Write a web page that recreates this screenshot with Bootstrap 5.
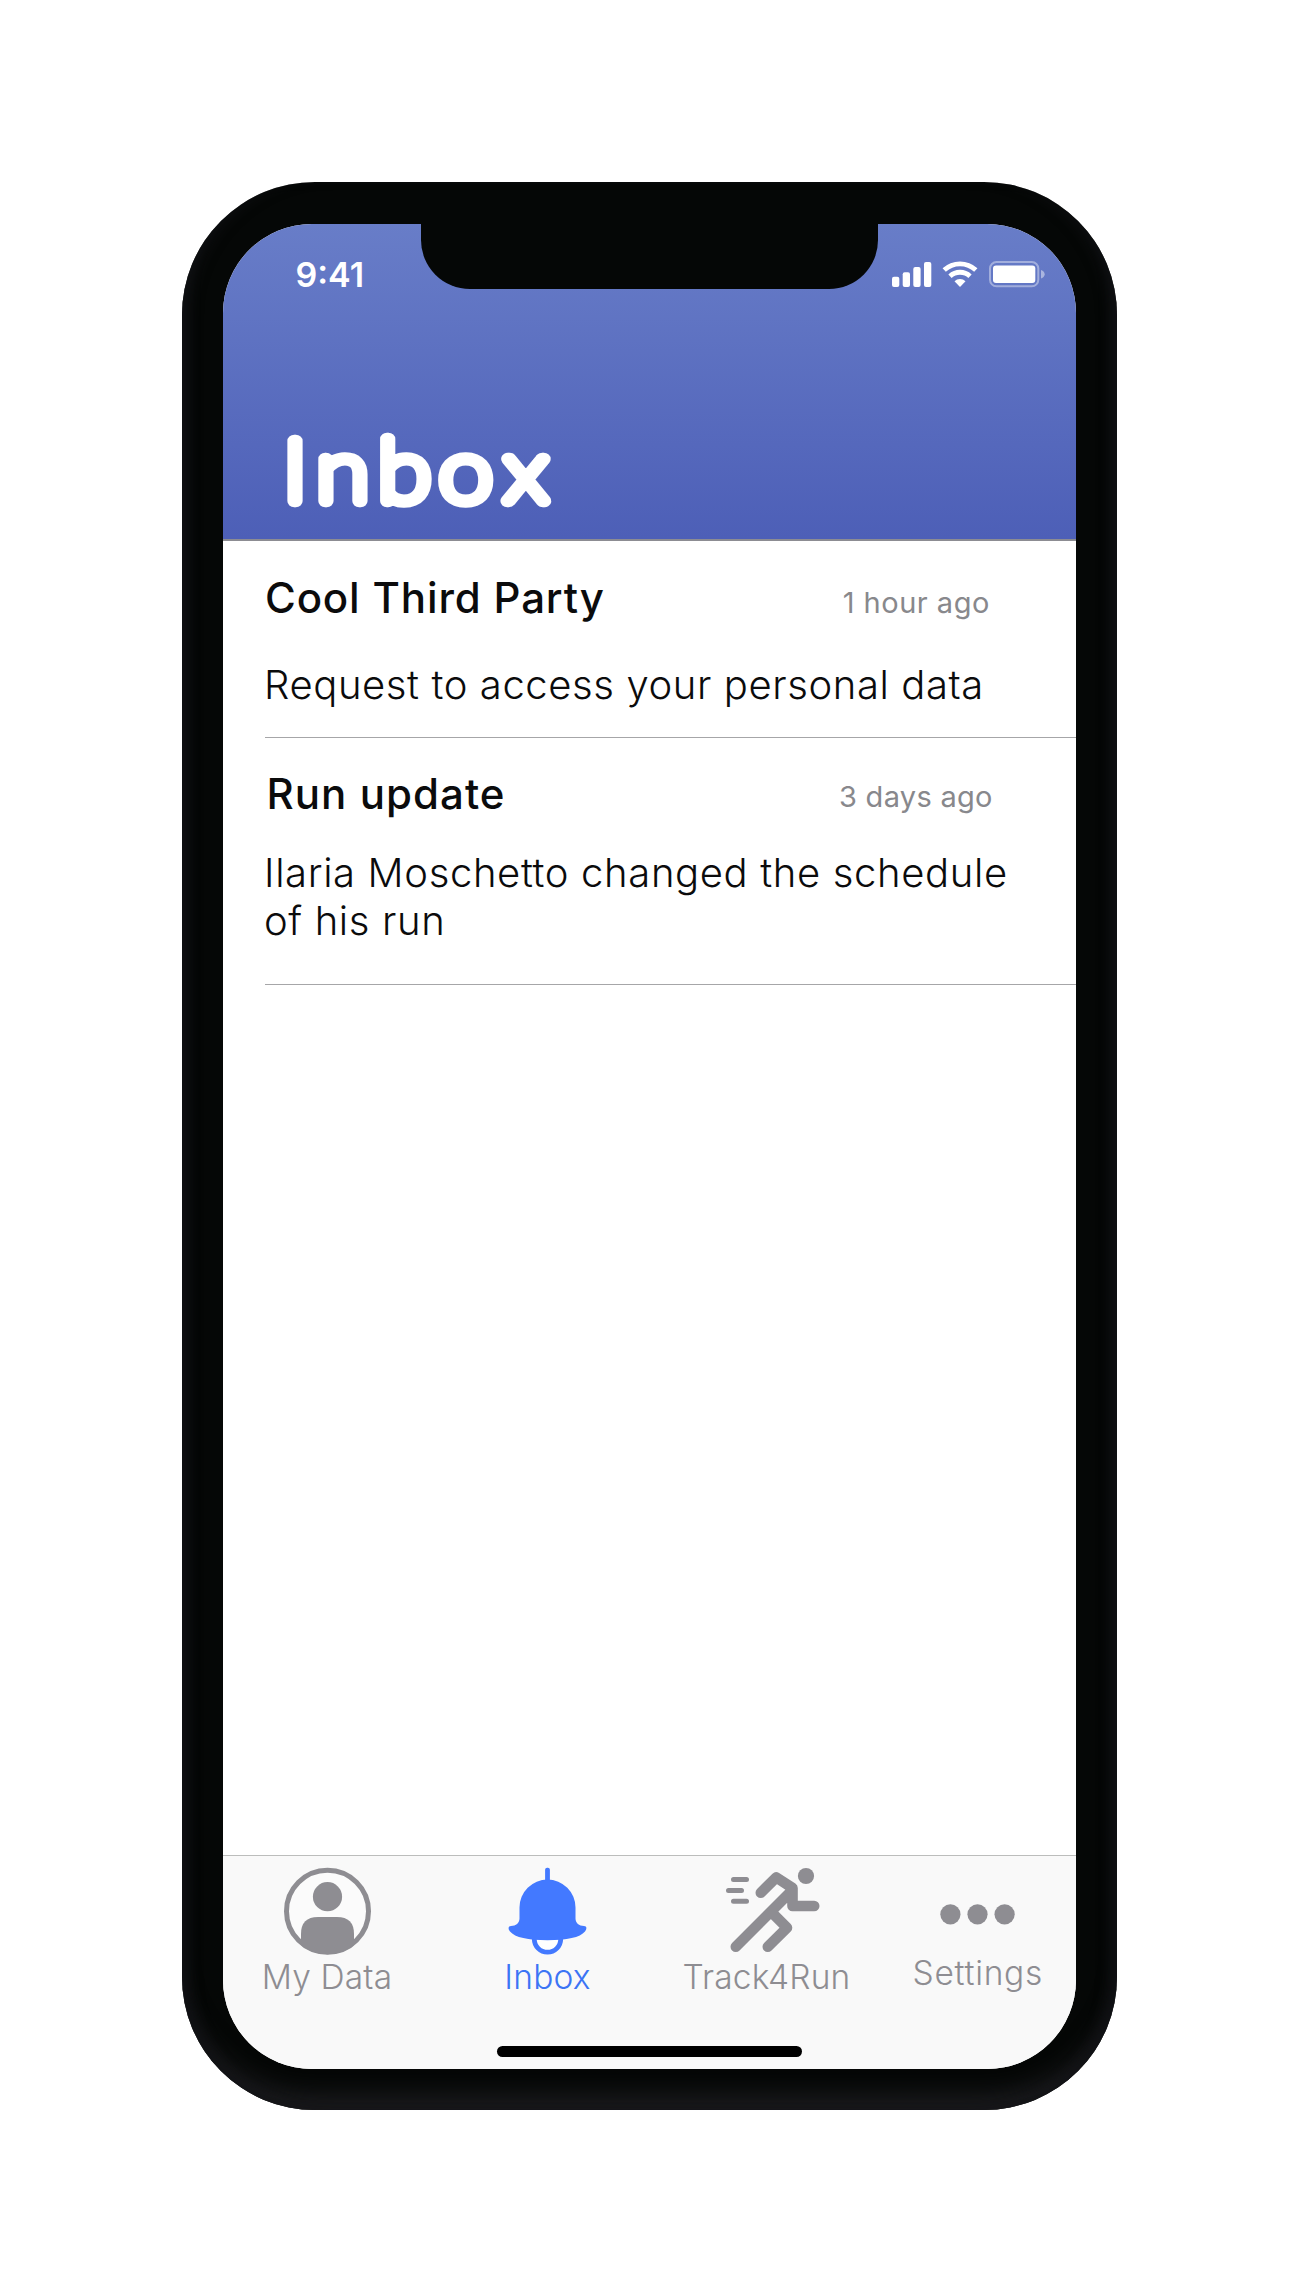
<!DOCTYPE html>
<html lang="en">
<head>
<meta charset="utf-8">
<meta name="viewport" content="width=device-width, initial-scale=1">
<title>Inbox</title>
<link href="https://cdn.jsdelivr.net/npm/bootstrap@5.3.0/dist/css/bootstrap.min.css" rel="stylesheet">
<style>
  body { font-family: Inter, "Liberation Sans", sans-serif; background: #fff; color: #0b0b0c; }
  svg { display: block; flex: none; }
  .stage { min-height: 2292px; padding-top: 182px; padding-left: 182px; }
  .phone { width: 934.5px; height: 1928px; padding: 42px 40.5px 41.5px; border-radius: 133px; background: #050706;
    box-shadow: inset 14px 0 14px -8px #101114, inset -14px 0 14px -8px #101114, inset 0 -24px 22px -8px #1b1b1e; }
  .screen { height: 100%; border-radius: 89px; background: #fff; }
  .notch { top: 0; left: 198.5px; width: 456.5px; height: 64.7px; border-radius: 0 0 49px 49px; background: #050706; }
  .app-header { height: 317px; background: linear-gradient(#687dc8, #4d5fb7); border-bottom: 2px solid #8c8c92; }
  .status-row { height: 100px; padding: 31px 30.5px 0 73px; }
  .clock { font-size: 34px; line-height: 40px; font-weight: 600; letter-spacing: 0; }
  .status-icons { margin-top: 5px; }
  .page-title { margin: 0 0 0 54px; height: 129px; }
  .page-title text { font-family: Lato, sans-serif; font-weight: 100; font-size: 86px; fill: #fff; stroke: #fff; stroke-width: 12.5px; stroke-linejoin: round; stroke-linecap: round; }
  .message { margin-left: 42.5px; border-bottom: 1.5px solid #a6a6a8; }
  .message-a { height: 197px; padding-top: 32.6px; }
  .message-b { height: 246.5px; padding-top: 32.3px; }
  .sender { font-size: 42px; line-height: 48px; font-weight: 500; letter-spacing: .85px; margin: 0; }
  .message-b .sender { letter-spacing: 1.05px; padding-left: 1.5px; }
  .when { font-size: 29px; line-height: 48px; color: #88888c; letter-spacing: .5px; margin: 5px 86.2px 0 0; font-weight: 400; }
  .message-b .when { letter-spacing: .3px; margin: 2.8px 83.2px 0 0; }
  .summary { font-size: 40px; line-height: 47.6px; font-weight: 300; letter-spacing: .6px; margin: 34px 0 0 -1px; }
  .message-b .summary { margin-top: 28.4px; letter-spacing: .64px; }
  .tabs { height: 213.5px; background: #f9f9f9; border-top: 1.5px solid #bcbdbc; padding-top: 8.5px; }
  .tab { color: #8e8d92; font-size: 33.5px; line-height: 40px; font-weight: 300; letter-spacing: .15px; text-decoration: none; white-space: nowrap; }
  .tab-on { color: #3c74f5; }
  .tab-data { width: 209px; } .tab-inbox { width: 232px; } .tab-run { width: 206px; }
  .tab-set { width: 206px; padding-left: 10.5px; letter-spacing: .7px; }
  .home-bar { width: 305px; height: 11px; border-radius: 6px; background: #000; margin: 0 auto 11.5px; }
</style>
</head>
<body>
<div class="stage">
  <div class="phone">
    <div class="screen position-relative overflow-hidden d-flex flex-column">
      <div class="notch position-absolute"></div>
      <header class="app-header text-white d-flex flex-column justify-content-between flex-shrink-0">
        <div class="status-row d-flex justify-content-between">
          <div class="clock">9:41</div>
          <svg class="status-icons" width="156" height="30" viewBox="0 0 156 30" fill="#fff">
            <rect x="2" y="16.7" width="7.3" height="10.3" rx="2"/>
            <rect x="12.7" y="12.3" width="7.3" height="14.7" rx="2"/>
            <rect x="23.3" y="7" width="7.3" height="20" rx="2"/>
            <rect x="34" y="2" width="7.3" height="25" rx="2"/>
            <g fill="none" stroke="#fff" stroke-width="4.8">
              <path d="M54.2 10A23.2 23.2 0 0 1 85.8 10"/>
              <path d="M60 16.2A14.7 14.7 0 0 1 80 16.2"/>
            </g>
            <path d="M64.500 21.200A8 8 0 0 1 75.500 21.200L70 27Z"/>
            <rect x="100" y="2.1" width="48.3" height="24.2" rx="6.5" fill="none" stroke="#fff" stroke-opacity=".4" stroke-width="2"/>
            <rect x="103" y="5.5" width="42.3" height="17.4" rx="3"/>
            <path d="M151 10Q154.700 11.500 154.700 14.300Q154.700 17 151 18.600Z" fill-opacity=".45"/>
          </svg>
        </div>
        <h1 class="page-title">
          <svg width="320" height="124" viewBox="0 0 320 124"><text transform="scale(1.12 1)" x="5.6 35.3 90.4 144.8 203.2" y="91">Inbox</text></svg>
        </h1>
      </header>
      <main class="flex-grow-1">
        <article class="message message-a">
          <div class="d-flex justify-content-between align-items-start">
            <h2 class="sender">Cool Third Party</h2>
            <span class="when">1 hour ago</span>
          </div>
          <p class="summary">Request to access your personal data</p>
        </article>
        <article class="message message-b">
          <div class="d-flex justify-content-between align-items-start">
            <h2 class="sender">Run update</h2>
            <span class="when">3 days ago</span>
          </div>
          <p class="summary">Ilaria Moschetto changed the schedule<br>of his run</p>
        </article>
      </main>
      <footer class="tabs d-flex flex-column justify-content-between flex-shrink-0">
        <nav class="d-flex">
          <a class="tab tab-data d-flex flex-column align-items-center" href="#">
            <svg width="90" height="92" viewBox="0 0 90 92" fill="#8e8d92">
              <clipPath id="disc"><circle cx="45.500" cy="46.300" r="43"/></clipPath>
              <circle cx="45.500" cy="46.300" r="41" fill="#fbfbfb" stroke="#8e8d92" stroke-width="5"/>
              <circle cx="45.500" cy="31.700" r="14.600"/>
              <path clip-path="url(#disc)" d="M19 92V69Q19 52 36 52H55Q72 52 72 69V92Z"/>
            </svg>
            <span>My Data</span>
          </a>
          <a class="tab tab-on tab-inbox d-flex flex-column align-items-center" href="#">
            <svg width="93" height="92" viewBox="0 0 93 92" fill="#4379ff">
              <circle cx="46.500" cy="74" r="13.200" fill="#fff" stroke="#4379ff" stroke-width="4.800"/>
              <rect x="44.100" y="2.700" width="4.800" height="16" rx="2"/>
              <path d="M18.500 42.500A28 28 0 0 1 74.500 42.500V53.500C74.500 58 78 61 83 61C86 61 86 64 84 66.500C79 72.500 66 75.200 46.500 75.200S14 72.500 9 66.500C7 64 7 61 10 61C15 61 18.500 58 18.500 53.500Z"/>
            </svg>
            <span>Inbox</span>
          </a>
          <a class="tab tab-run d-flex flex-column align-items-center" href="#">
            <svg width="110" height="92" viewBox="0 0 110 92" fill="none" stroke="#8e8d92" stroke-linecap="round" stroke-linejoin="round">
              <circle cx="94" cy="11" r="8.100" fill="#8e8d92" stroke="none"/>
              <path stroke-width="5" d="M21.500 14.500H34.500M16.500 25.500H29.500M21.500 36.300H34.500"/>
              <path stroke-width="10.600" d="M48.800 27.700L64.200 12.400L80.500 23V41H102.200M23.800 81.700L77.500 28M59 46.700L75 62.700L55.800 81.700"/>
            </svg>
            <span>Track4Run</span>
          </a>
          <a class="tab tab-set d-flex flex-column align-items-center" href="#">
            <svg width="93" height="88" viewBox="0 0 93 88" fill="#8e8d92">
              <circle cx="19.400" cy="49.300" r="10.100"/><circle cx="46.500" cy="49.300" r="10.100"/><circle cx="73.600" cy="49.300" r="10.100"/>
            </svg>
            <span>Settings</span>
          </a>
        </nav>
        <div class="home-bar"></div>
      </footer>
    </div>
  </div>
</div>
<script src="https://cdn.jsdelivr.net/npm/bootstrap@5.3.0/dist/js/bootstrap.bundle.min.js"></script>
</body>
</html>
